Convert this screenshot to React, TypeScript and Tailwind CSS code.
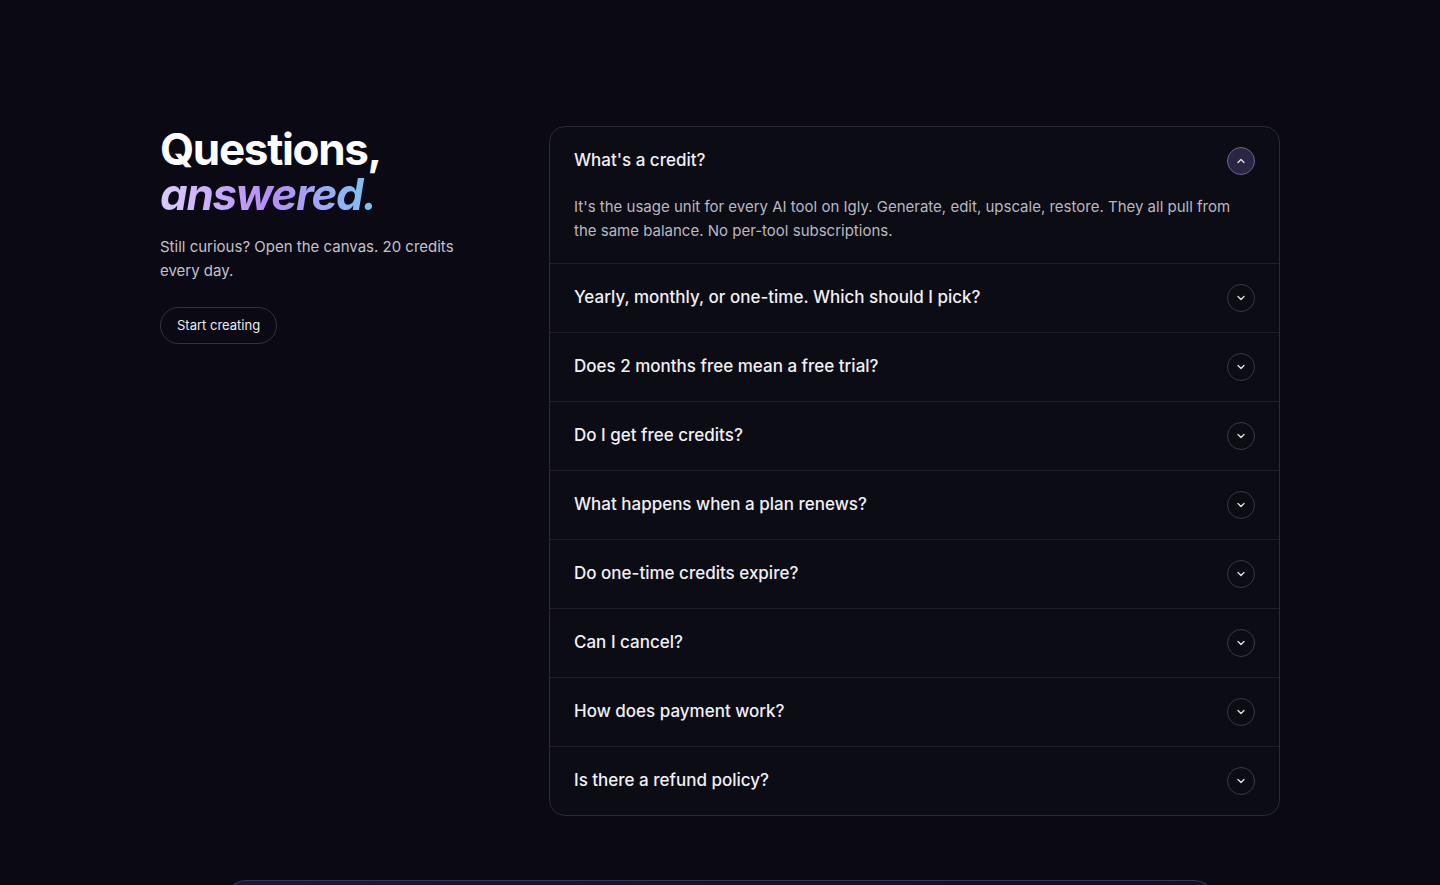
import { ChevronDown, ChevronUp } from 'lucide-react';

const faqs = [
  {
    q: "What's a credit?",
    a: "It's the usage unit for every AI tool on Igly. Generate, edit, upscale, restore. They all pull from the same balance. No per-tool subscriptions.",
  },
  { q: 'Yearly, monthly, or one-time. Which should I pick?' },
  { q: 'Does 2 months free mean a free trial?' },
  { q: 'Do I get free credits?' },
  { q: 'What happens when a plan renews?' },
  { q: 'Do one-time credits expire?' },
  { q: 'Can I cancel?' },
  { q: 'How does payment work?' },
  { q: 'Is there a refund policy?' },
];

export default function App() {
  return (
    <div className="min-h-screen bg-[#0a0914] text-white font-['Inter',sans-serif] overflow-hidden">
      <section className="max-w-[1120px] mx-auto pt-[126px] flex gap-[59px]">
        {/* Intro */}
        <div className="w-[330px] shrink-0">
          <h2 className="text-[44px] leading-[45px] font-bold tracking-[-0.03em] mt-[1px]">
            Questions,
            <br />
            <span className="italic bg-gradient-to-r from-[#dccbfb] via-[#b58cf6] to-[#72c6f3] bg-clip-text text-transparent pr-1">
              answered.
            </span>
          </h2>
          <p className="mt-[18px] text-[15px] leading-6 text-[#c3c2cc] max-w-[310px]">
            Still curious? Open the canvas. 20 credits every day.
          </p>
          <button className="mt-[24px] h-[37px] px-4 rounded-full border border-[#34333d] text-[13px] text-[#ececf1]">
            Start creating
          </button>
        </div>

        {/* Accordion */}
        <div className="flex-1 rounded-2xl border border-[#2b2a35] bg-[#0c0c14] overflow-hidden">
          {faqs.map((item, i) => {
            const open = i === 0;
            return (
              <div key={item.q} className={i > 0 ? 'border-t border-[#1f1e28]' : ''}>
                <div className={`flex items-center justify-between px-6 ${open ? 'h-[67px]' : 'h-[68px]'}`}>
                  <span className="text-[17px] font-medium text-[#f1f0f5]">{item.q}</span>
                  {open ? (
                    <span className="w-7 h-7 rounded-full border border-[#6c6296] bg-[#2a2540] flex items-center justify-center">
                      <ChevronUp size={12} strokeWidth={2.5} className="text-[#e8e4f8]" />
                    </span>
                  ) : (
                    <span className="w-7 h-7 rounded-full border border-[#3a3944] flex items-center justify-center">
                      <ChevronDown size={12} strokeWidth={2.5} className="text-[#e5e5ea]" />
                    </span>
                  )}
                </div>
                {open && (
                  <p className="px-6 pt-[1px] pb-[20px] pr-[40px] text-[15px] leading-6 text-[#b9b8c2]">{item.a}</p>
                )}
              </div>
            );
          })}
        </div>
      </section>

      {/* Next section peeking in */}
      <div className="max-w-[988px] mx-auto mt-[64px] h-[40px] rounded-t-[20px] border-t border-x border-[#34345a] bg-gradient-to-r from-[#1a1a38] via-[#141428] to-[#12121f]" />
    </div>
  );
}
